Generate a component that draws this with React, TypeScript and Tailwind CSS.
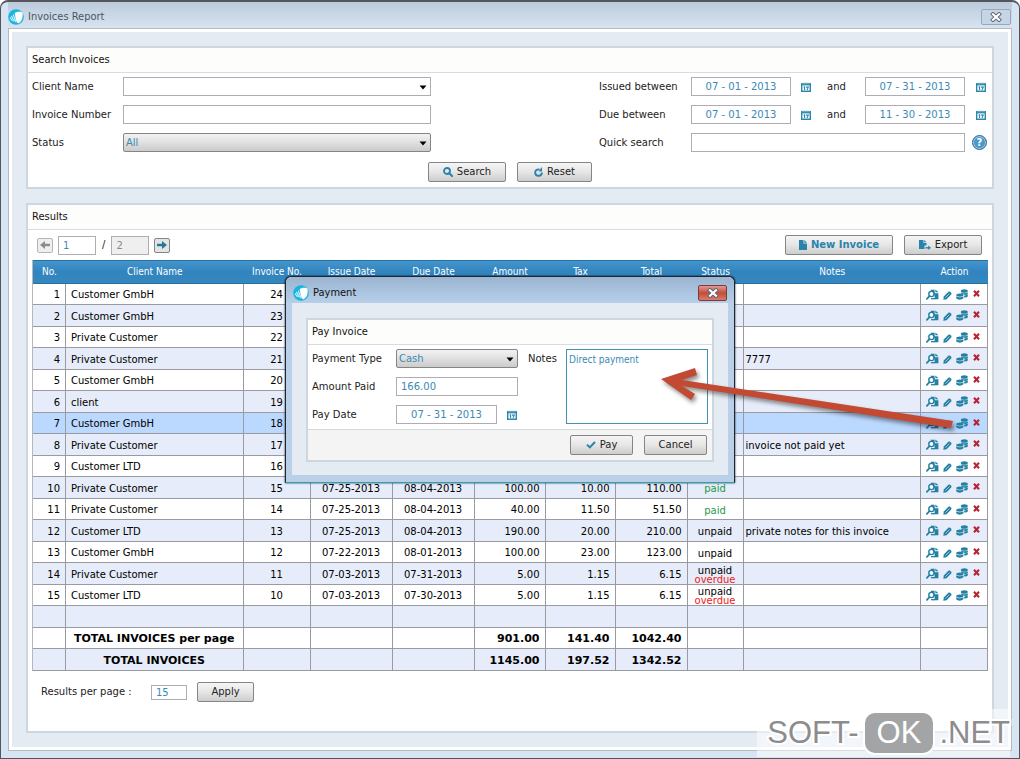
import type { ReactNode } from 'react';
import clsx from 'clsx';

interface Invoice {
  client: string;
  number: number;
  issued: string;
  due: string;
  amount: string;
  tax: string;
  total: string;
  status: 'paid' | 'unpaid';
  overdue?: boolean;
  notes?: string;
}

const invoices: Invoice[] = [
  { client: 'Customer GmbH', number: 24, issued: '', due: '', amount: '', tax: '', total: '', status: 'unpaid' },
  { client: 'Customer GmbH', number: 23, issued: '', due: '', amount: '', tax: '', total: '', status: 'unpaid' },
  { client: 'Private Customer', number: 22, issued: '', due: '', amount: '', tax: '', total: '', status: 'unpaid' },
  { client: 'Private Customer', number: 21, issued: '', due: '', amount: '', tax: '', total: '', status: 'unpaid', notes: '7777' },
  { client: 'Customer GmbH', number: 20, issued: '', due: '', amount: '', tax: '', total: '', status: 'paid' },
  { client: 'client', number: 19, issued: '', due: '', amount: '', tax: '', total: '', status: 'paid' },
  { client: 'Customer GmbH', number: 18, issued: '', due: '', amount: '', tax: '', total: '166.00', status: 'unpaid' },
  { client: 'Private Customer', number: 17, issued: '', due: '', amount: '', tax: '', total: '', status: 'unpaid', notes: 'invoice not paid yet' },
  { client: 'Customer LTD', number: 16, issued: '', due: '', amount: '', tax: '', total: '', status: 'paid' },
  { client: 'Private Customer', number: 15, issued: '07-25-2013', due: '08-04-2013', amount: '100.00', tax: '10.00', total: '110.00', status: 'paid' },
  { client: 'Private Customer', number: 14, issued: '07-25-2013', due: '08-04-2013', amount: '40.00', tax: '11.50', total: '51.50', status: 'paid' },
  { client: 'Customer LTD', number: 13, issued: '07-25-2013', due: '08-04-2013', amount: '190.00', tax: '20.00', total: '210.00', status: 'unpaid', notes: 'private notes for this invoice' },
  { client: 'Customer GmbH', number: 12, issued: '07-22-2013', due: '08-01-2013', amount: '100.00', tax: '23.00', total: '123.00', status: 'unpaid' },
  { client: 'Private Customer', number: 11, issued: '07-03-2013', due: '07-31-2013', amount: '5.00', tax: '1.15', total: '6.15', status: 'unpaid', overdue: true },
  { client: 'Customer LTD', number: 10, issued: '07-03-2013', due: '07-30-2013', amount: '5.00', tax: '1.15', total: '6.15', status: 'unpaid', overdue: true },
];

const selectedRow = 7;

const columns = [
  { label: 'No.', width: 'w-[33px]' },
  { label: 'Client Name', width: '' },
  { label: 'Invoice No.', width: 'w-[67px]' },
  { label: 'Issue Date', width: 'w-[82px]' },
  { label: 'Due Date', width: 'w-[82px]' },
  { label: 'Amount', width: 'w-[71px]' },
  { label: 'Tax', width: 'w-[70px]' },
  { label: 'Total', width: 'w-[72px]' },
  { label: 'Status', width: 'w-[56px]' },
  { label: 'Notes', width: '' },
  { label: 'Action', width: 'w-[67px]' },
];

const condensed = "font-['DejaVu_Sans_Condensed','DejaVu_Sans',sans-serif]";
const inputStyle = 'h-[19px] w-full border border-[#adadb3] bg-white px-1 text-[10px] text-[#3a8ab5] outline-none';

const Logo = () => (
  <svg viewBox="0 0 16 16" className="h-4 w-4 shrink-0">
    <circle cx="8" cy="8" r="7.8" fill="#19b4e0" />
    <path d="M6.6 4 C9.6 2.2 13 2.4 14.4 3.6 C15.2 7.5 14.2 12.6 10.8 14.2 C9.2 14.4 8.4 12.4 7.8 10.2 Z" fill="#fff" />
    <path d="M5.2 5.8 L8.2 13.4 M3.4 7 L6.4 12.6 M2 8.6 L4.6 12" stroke="#d9f4fc" strokeWidth="1.1" fill="none" />
  </svg>
);

const CalendarIcon = () => (
  <svg viewBox="0 0 10 10" className="h-[10px] w-[10px]">
    <path d="M0.7 1.6 H9.3 V9.3 H0.7 Z" fill="#fff" stroke="#2e87ab" strokeWidth="1.4" />
    <path d="M0 1 H10 V3.4 H0 Z" fill="#2e87ab" />
    <path d="M2 0 V2.2 M4 0 V2.2 M6 0 V2.2 M8 0 V2.2" stroke="#b7dcea" strokeWidth="0.8" />
    <path d="M2.6 5.2 L3.6 4.8 V8 M5 5.1 H7.3 L6 8" stroke="#2e87ab" strokeWidth="1.1" fill="none" />
  </svg>
);

const Cross = ({ className }: { className: string }) => (
  <svg viewBox="0 0 12 10" className={className}>
    <path d="M3 2.2 L9 7.8 M9 2.2 L3 7.8" stroke="#5b6470" strokeWidth="4" strokeLinecap="square" />
    <path d="M3 2.2 L9 7.8 M9 2.2 L3 7.8" stroke="#fff" strokeWidth="2.2" strokeLinecap="square" />
  </svg>
);

const SearchIcon = () => (
  <svg viewBox="0 0 10 10" className="h-[10px] w-[10px]">
    <circle cx="4" cy="4" r="3" fill="none" stroke="#2a83ab" strokeWidth="1.8" />
    <path d="M6.3 6.3 L9 9" stroke="#2a83ab" strokeWidth="2" strokeLinecap="round" />
  </svg>
);

const ResetIcon = () => (
  <svg viewBox="0 0 9 10" className="h-[10px] w-[9px]">
    <path d="M5.4 2.4 C2.2 2.2 1 4.2 1.2 5.8 C1.5 8 3.2 8.9 4.8 8.8 C6.8 8.6 7.9 7.2 7.9 5.4" fill="none" stroke="#2a83ab" strokeWidth="1.9" />
    <path d="M4.4 4.2 L8 0 V4.6 Z" fill="#2a83ab" />
  </svg>
);

const PageIcon = () => (
  <svg viewBox="0 0 8 10" className="h-[10px] w-[8px]">
    <path d="M0 0 H4.5 V3.5 H8 V10 H0 Z M5.3 0 L8 2.7 H5.3 Z" fill="#2a83ab" />
  </svg>
);

const ExportIcon = () => (
  <svg viewBox="0 0 12 10" className="h-[10px] w-3">
    <path d="M0 0 H4.5 V3 H7.5 V5.5 H5.5 V9 H0 Z M5.2 0 L7.5 2.3 H5.2 Z" fill="#2a83ab" />
    <path d="M6.5 7.8 H10" stroke="#2a83ab" strokeWidth="1.4" />
    <path d="M9.2 5.4 L12 7.8 L9.2 10 Z" fill="#2a83ab" />
  </svg>
);

const CheckIcon = () => (
  <svg viewBox="0 0 10 8" className="h-2 w-[10px]">
    <path d="M1 3.6 L3.8 6.4 L9 1" fill="none" stroke="#2a83ab" strokeWidth="2" />
  </svg>
);

const ArrowIcon = ({ left }: { left?: boolean }) => (
  <svg viewBox="0 0 10 8" className={clsx('h-2 w-[10px]', left && 'rotate-180')}>
    <path d="M0 2.8 H5 V0 L10 4 L5 8 V5.2 H0 Z" fill={left ? '#8c8c8c' : '#23799d'} />
  </svg>
);

const ViewIcon = () => (
  <svg viewBox="0 0 13 11" className="h-[11px] w-[13px]">
    <path d="M4.6 0.8 H8.6 V4.2 H12.4 V10.2 H8.6 V6 L5 2.4 Z" fill="#2380a3" />
    <path d="M9.4 0.4 L12.4 3.3 H9.4 Z" fill="#2380a3" />
    <circle cx="5.4" cy="5" r="2.6" fill="#fff" stroke="#2380a3" strokeWidth="1.4" />
    <path d="M3.5 7.2 L0.9 9.8" stroke="#2380a3" strokeWidth="1.8" strokeLinecap="round" />
    <path d="M5 9.7 H9" stroke="#2380a3" strokeWidth="1.3" />
  </svg>
);

const EditIcon = () => (
  <svg viewBox="0 0 9 9" className="h-[9px] w-[9px]">
    <path d="M0.3 8.7 L0.8 5.4 L5.4 0.8 C6.8 -0.3 9.3 1.8 8.2 3.6 L3.6 8.2 Z" fill="#2380a3" />
    <path d="M2.4 6.7 L6.5 2.5" stroke="#a8d4e2" strokeWidth="0.9" />
  </svg>
);

const CoinsIcon = () => (
  <svg viewBox="0 0 12 11" className="h-[11px] w-3">
    <ellipse cx="8.3" cy="2" rx="3.5" ry="1.8" fill="#2380a3" />
    <path d="M5 3.2 C6.5 4.6 10 4.6 11.8 3.2 V5 C10.8 5.9 9 6.2 7.6 5.6 L5 4.4 Z M8.2 6.4 C9.6 6.5 10.9 6.2 11.8 5.6 V7.6 C10.9 8.5 9.5 8.8 8.2 8.5 Z" fill="#2380a3" />
    <ellipse cx="3.8" cy="6.1" rx="3.6" ry="1.6" fill="#2380a3" />
    <path d="M0.2 7.2 C1.8 8.6 5.6 8.6 7.4 7.2 V9.3 C5.6 11.2 1.8 11.2 0.2 9.3 Z" fill="#2380a3" />
  </svg>
);

const DeleteIcon = () => (
  <svg viewBox="0 0 7 7" className="h-[7px] w-[7px]">
    <path d="M1 0.8 L6 6.2 M6 0.8 L1 6.2" stroke="#b72334" strokeWidth="2.1" />
  </svg>
);

interface ButtonProps {
  children: ReactNode;
  className?: string;
}

const Button = ({ children, className = 'text-[#222]' }: ButtonProps) => (
  <button
    type="button"
    className={clsx(
      'flex h-5 items-center justify-center gap-1 rounded-[2px] border border-[#858585] bg-gradient-to-b from-[#f5f5f5] via-[#e6e6e6] to-[#cdcdcd] text-[10px]',
      className,
    )}
  >
    {children}
  </button>
);

interface SelectProps {
  id: string;
  value: string;
  plain?: boolean;
}

const Select = ({ id, value, plain }: SelectProps) => (
  <div className="relative">
    <select
      id={id}
      defaultValue={value}
      className={clsx(
        'block h-[19px] w-full appearance-none border px-[2px] text-[10px] text-[#3a8ab5] outline-none',
        plain
          ? 'border-[#adadb3] bg-white'
          : 'rounded-[2px] border-[#858585] bg-gradient-to-b from-[#f2f2f2] via-[#e0e0e0] to-[#cbcbcb]',
      )}
    >
      <option>{value}</option>
    </select>
    <svg viewBox="0 0 8 5" className="pointer-events-none absolute top-2 right-1 h-[5px] w-2">
      <path d="M0.5 0.5 H7.5 L4 4.5 Z" fill="#000" />
    </svg>
  </div>
);

interface DateInputProps {
  id?: string;
  label?: string;
  value: string;
}

const DateInput = ({ id, label, value }: DateInputProps) => (
  <input id={id} aria-label={label} defaultValue={value} className={clsx(inputStyle, 'text-center')} />
);

const CalendarButton = ({ label }: { label: string }) => (
  <button type="button" aria-label={label}>
    <CalendarIcon />
  </button>
);

interface PanelProps {
  title: string;
  className?: string;
  children: ReactNode;
}

const Panel = ({ title, className, children }: PanelProps) => (
  <section className={clsx('border-2 border-[#cdd7df] bg-white', className)}>
    <h2 className={clsx('h-[25px] border-b border-[#d3dde2] bg-[#fdfdfb] pl-1 text-[11px] leading-6 text-[#111]', condensed)}>
      {title}
    </h2>
    {children}
  </section>
);

const SearchPanel = () => (
  <Panel title="Search Invoices">
    <div className="flex justify-between px-1 pt-1">
      <div className="grid grid-cols-[91px_308px] items-center gap-y-[9px]">
        <label htmlFor="client">Client Name</label>
        <Select id="client" value="" plain />
        <label htmlFor="number">Invoice Number</label>
        <input id="number" className={inputStyle} />
        <label htmlFor="status">Status</label>
        <Select id="status" value="All" />
      </div>
      <div className="grid grid-cols-[92px_100px_74px_100px_23px] items-center gap-y-[9px]">
        <label htmlFor="issued-from">Issued between</label>
        <DateInput id="issued-from" value="07 - 01 - 2013" />
        <div className="flex items-center gap-4 pl-[10px]">
          <CalendarButton label="Issued from" />
          <span>and</span>
        </div>
        <DateInput label="Issued to" value="07 - 31 - 2013" />
        <div className="flex justify-center pl-2">
          <CalendarButton label="Issued to" />
        </div>
        <label htmlFor="due-from">Due between</label>
        <DateInput id="due-from" value="07 - 01 - 2013" />
        <div className="flex items-center gap-4 pl-[10px]">
          <CalendarButton label="Due from" />
          <span>and</span>
        </div>
        <DateInput label="Due to" value="11 - 30 - 2013" />
        <div className="flex justify-center pl-2">
          <CalendarButton label="Due to" />
        </div>
        <label htmlFor="quick">Quick search</label>
        <input id="quick" className={clsx(inputStyle, 'col-span-3')} />
        <button
          type="button"
          className="ml-[7px] flex h-[15px] w-[15px] items-center justify-center rounded-full border border-[#2d6f9f] bg-[#4a97c8] text-[10px] font-bold text-white ring-1 ring-[#a9cde3] ring-inset"
        >
          ?
        </button>
      </div>
    </div>
    <div className="flex justify-center gap-[11px] pt-[10px] pb-[5px]">
      <Button className="w-[78px]">
        <SearchIcon />
        Search
      </Button>
      <Button className="w-[75px]">
        <ResetIcon />
        Reset
      </Button>
    </div>
  </Panel>
);

const cell = 'border-r border-b border-[#999ba0] pt-[2px] pb-0';

const RowActions = () => (
  <div className="flex items-center gap-1 pb-[2px] pl-[5px]">
    <button type="button" aria-label="View"><ViewIcon /></button>
    <button type="button" aria-label="Edit" className="pt-[2px]"><EditIcon /></button>
    <button type="button" aria-label="Pay"><CoinsIcon /></button>
    <button type="button" aria-label="Delete" className="pb-[2px] pl-[1px]"><DeleteIcon /></button>
  </div>
);

interface TotalsRowProps {
  label?: string;
  values?: string[];
}

const TotalsRow = ({ label, values = ['', '', ''] }: TotalsRowProps) => (
  <tr className="h-[21px] bg-white even:h-[22px] even:bg-[#e6ecf9]">
    <td className={cell} />
    <td className={clsx(cell, 'text-center text-[11px] font-bold')}>{label}</td>
    <td className={cell} />
    <td className={cell} />
    <td className={cell} />
    {values.map((value, index) => (
      <td key={index} className={clsx(cell, 'pr-[5px] text-right text-[11px] font-bold')}>{value}</td>
    ))}
    <td className={cell} />
    <td className={cell} />
    <td className={cell} />
  </tr>
);

const InvoiceTable = () => (
  <table className="w-full table-fixed border-separate border-spacing-0 border-l border-[#b4b8bd] leading-[10px] text-black">
    <colgroup>
      {columns.map((column) => (
        <col key={column.label} className={column.width} />
      ))}
    </colgroup>
    <thead>
      <tr className={clsx('h-6 bg-gradient-to-b from-[#4796cf] via-[#3084bd] to-[#3787c0] text-white', condensed)}>
        {columns.map((column) => (
          <th key={column.label} className="border-y border-[#24719f] p-0 text-[10px] font-normal">
            {column.label}
          </th>
        ))}
      </tr>
    </thead>
    <tbody>
      {invoices.map((invoice, index) => (
        <tr
          key={invoice.number}
          className={clsx('h-[21px] even:h-[22px]', index + 1 === selectedRow ? 'bg-[#bbd8ff]' : 'bg-white even:bg-[#e6ecf9]')}
        >
          <td className={clsx(cell, 'pr-[5px] text-right')}>{index + 1}</td>
          <td className={clsx(cell, 'pl-[5px]')}>{invoice.client}</td>
          <td className={clsx(cell, 'text-center')}>{invoice.number}</td>
          <td className={clsx(cell, 'text-center')}>{invoice.issued}</td>
          <td className={clsx(cell, 'text-center')}>{invoice.due}</td>
          <td className={clsx(cell, 'pr-[5px] text-right')}>{invoice.amount}</td>
          <td className={clsx(cell, 'pr-[5px] text-right')}>{invoice.tax}</td>
          <td className={clsx(cell, 'pr-[5px] text-right')}>{invoice.total}</td>
          <td className={clsx(cell, 'text-center leading-[9px]', invoice.status === 'paid' && 'text-[#1d9a48]')}>
            {invoice.status}
            {invoice.overdue && <span className="block text-[#f02020]">overdue</span>}
          </td>
          <td className={clsx(cell, 'pl-[2px]')}>{invoice.notes}</td>
          <td className={cell}>
            <RowActions />
          </td>
        </tr>
      ))}
      <TotalsRow />
      <TotalsRow label="TOTAL INVOICES per page" values={['901.00', '141.40', '1042.40']} />
      <TotalsRow label="TOTAL INVOICES" values={['1145.00', '197.52', '1342.52']} />
    </tbody>
  </table>
);

const ResultsPanel = () => (
  <Panel title="Results" className="flex-1">
    <div className="flex items-center justify-between py-[5px] pr-[10px] pl-[9px]">
      <div className="flex items-center gap-[5px]">
        <button
          type="button"
          aria-label="Previous page"
          className="flex h-[15px] w-4 items-center justify-center rounded-[2px] border border-[#b5b5b5] bg-[#efefef]"
        >
          <ArrowIcon left />
        </button>
        <input aria-label="Page" defaultValue="1" className="h-[19px] w-[38px] border border-[#adadb3] px-1 text-[10px] text-[#3a8ab5]" />
        <span className="px-[1px]">/</span>
        <input aria-label="Pages" defaultValue="2" readOnly className="h-[19px] w-[38px] border border-[#adadb3] bg-[#efefef] px-1 text-[10px] text-[#8a8a8a]" />
        <button
          type="button"
          aria-label="Next page"
          className="flex h-[15px] w-4 items-center justify-center rounded-[2px] border border-[#858585] bg-[#e4e4e4]"
        >
          <ArrowIcon />
        </button>
      </div>
      <div className="flex gap-[11px]">
        <Button className="w-[108px] font-bold text-[#2a83ab]">
          <PageIcon />
          New Invoice
        </Button>
        <Button className="w-[78px]">
          <ExportIcon />
          Export
        </Button>
      </div>
    </div>
    <div className="px-1">
      <InvoiceTable />
    </div>
    <div className="flex items-center gap-[10px] pt-[11px] pl-[13px]">
      <label htmlFor="per-page" className="w-[100px]">Results per page :</label>
      <input id="per-page" defaultValue="15" className="h-[15px] w-9 border border-[#adadb3] px-1 text-[10px] text-[#3a8ab5]" />
      <Button className="w-[57px]">Apply</Button>
    </div>
  </Panel>
);

const PaymentDialog = () => (
  <div
    role="dialog"
    aria-label="Payment"
    className="w-[450px] rounded-t-md border border-[#1d2733] border-b-[#2ba0b4] bg-[#b9d0e8] shadow-[0_0_2px_#000]"
  >
    <div className="flex h-[26px] items-center gap-1 rounded-t-md bg-gradient-to-b from-[#9ab4d1] to-[#b7cfe9] px-[7px] pt-[6px]">
      <Logo />
      <h2 className={clsx('flex-1 text-[11px] text-[#111]', condensed)}>Payment</h2>
      <button
        type="button"
        aria-label="Close payment"
        className="flex h-4 w-[29px] items-center justify-center rounded-[2px] border border-[#7c3a3a] bg-gradient-to-b from-[#dd9a91] via-[#c34c3b] to-[#d87d6a]"
      >
        <Cross className="h-[10px] w-3" />
      </button>
    </div>
    <div className="mx-[6px] mb-[7px] bg-[#e4ebf3] px-[14px] pt-[15px] pb-[13px]">
      <Panel title="Pay Invoice">
        <div className="flex px-1 pt-1 pb-[5px]">
          <div className="grid grid-cols-[84px_122px] items-center gap-y-[9px] self-start">
            <label htmlFor="payment-type">Payment Type</label>
            <Select id="payment-type" value="Cash" />
            <label htmlFor="amount-paid">Amount Paid</label>
            <input id="amount-paid" defaultValue="166.00" className={inputStyle} />
            <label htmlFor="pay-date">Pay Date</label>
            <div className="flex items-center gap-[10px]">
              <div className="w-[101px]">
                <DateInput id="pay-date" value="07 - 31 - 2013" />
              </div>
              <CalendarButton label="Choose pay date" />
            </div>
          </div>
          <label htmlFor="payment-notes" className="w-12 shrink-0 pt-1 pl-[10px]">Notes</label>
          <div className="flex-1">
            <textarea
              id="payment-notes"
              defaultValue="Direct payment"
              className={clsx('block h-[75px] w-full resize-none border border-[#4291ae] bg-white px-[2px] py-[2px] text-[10px] leading-4 text-[#3a8ab5] outline-none', condensed)}
            />
          </div>
        </div>
        <div className="flex justify-end gap-[11px] border-t border-[#d3d9dd] bg-[#f4f4f4] px-[5px] py-[5px]">
          <Button className="w-[63px]">
            <CheckIcon />
            Pay
          </Button>
          <Button className="w-[63px]">Cancel</Button>
        </div>
      </Panel>
    </div>
  </div>
);

const PointerArrow = () => (
  <svg viewBox="0 0 310 70" className="pointer-events-none absolute top-[362px] right-[54px] h-[70px] w-[310px] drop-shadow-[2px_3px_2px_rgba(0,0,0,0.45)]">
    <path d="M5 17 L39 6 L41 13 L26 18 L297 59 L295 66 L26 24 L39 32 L35 38 Z" fill="#c24a33" />
  </svg>
);

const Watermark = () => (
  <div className="pointer-events-none absolute right-[10px] bottom-[2px] flex h-12 items-center bg-white/50 pl-[10px] font-['Liberation_Sans',sans-serif] text-[31px] text-[#8d8d8d]">
    <span className="[-webkit-text-stroke:4px_white] [paint-order:stroke]">SOFT-</span>
    <span className="mx-1 rounded-xl border-2 border-white bg-[#a3a4a6] px-[12px] leading-[40px] text-white">OK</span>
    <span className="[-webkit-text-stroke:4px_white] [paint-order:stroke]">.NET</span>
  </div>
);

export default function App() {
  return (
    <div className="relative min-h-screen bg-white font-['DejaVu_Sans',Verdana,sans-serif] text-[10px] leading-3 text-[#222]">
      <div className="flex min-h-screen flex-col rounded-t-lg border border-t-2 border-[#55565b] bg-[#d7e4f1] px-[7px] pb-[7px]">
        <header className="flex h-[26px] shrink-0 items-center gap-1 bg-gradient-to-b from-[#bccbdb] to-[#d7e4f1] pt-1 pr-[1px]">
          <Logo />
          <h1 className={clsx('flex-1 text-[11px] text-[#4b5663]', condensed)}>Invoices Report</h1>
          <button
            type="button"
            aria-label="Close"
            className="flex h-4 w-[30px] items-center justify-center rounded-[2px] border border-[#98a7ba] bg-[#c6d5e5]"
          >
            <Cross className="h-[10px] w-3" />
          </button>
        </header>
        <main className="flex flex-1 flex-col gap-[14px] border border-[#b3bac2] bg-[#e4ebf3] p-[17px] outline-[3px] -outline-offset-4 outline-white">
          <SearchPanel />
          <ResultsPanel />
        </main>
      </div>
      <div className="pointer-events-none absolute inset-x-0 top-[276px] flex justify-center">
        <div className="pointer-events-auto">
          <PaymentDialog />
        </div>
      </div>
      <PointerArrow />
      <Watermark />
    </div>
  );
}
